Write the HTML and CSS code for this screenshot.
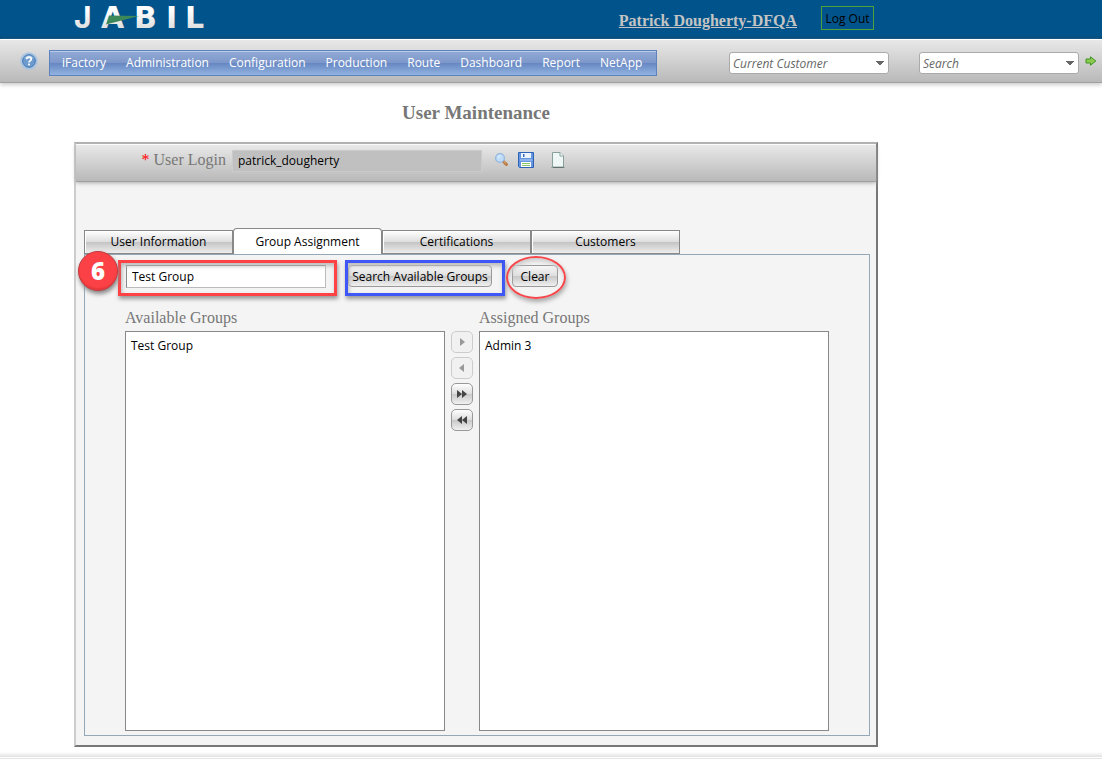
FILE: index.html
```html
<!DOCTYPE html>
<html lang="en">
<head>
<meta charset="utf-8">
<meta name="viewport" content="width=device-width, initial-scale=1">
<title>User Maintenance</title>
<link rel="stylesheet" href="styles.css">
</head>
<body>
<header class="banner">
  <svg class="logo" viewBox="0 0 140 38" role="img" aria-label="Jabil">
    <defs><linearGradient id="silver" x1="0" y1="0" x2="0" y2="1"><stop offset="0.3" stop-color="#fff"/><stop offset="1" stop-color="#d4d4d4"/></linearGradient></defs>
    <text y="28" fill="url(#silver)"><tspan class="logo-narrow" x="1">J</tspan><tspan class="logo-wide" x="28 61 93 112">ABIL</tspan></text>
    <path d="M36 15.5 66 16 33 24.5Z" fill="#3d8858"/>
  </svg>
  <a class="account" href="#">Patrick Dougherty-DFQA</a>
  <button class="logout" type="button">Log Out</button>
</header>
<div class="toolbar">
  <a class="help" href="#" aria-label="Help">
    <svg viewBox="0 0 18 18" width="18" height="18"><circle cx="9" cy="9" r="8.7" fill="#a9c4e2"/><circle cx="9" cy="9" r="6.3" fill="#6d9bce" stroke="#4679b3"/><path d="M4 6Q9 1 14 6Q9 8 4 6" fill="#9bbfe3"/><path d="M6.7 7.2Q6.8 5 9 5Q11.3 5 11.3 7Q11.3 8.2 9.9 8.9Q9 9.4 9 10.5" fill="none" stroke="#fff" stroke-width="1.7"/><rect x="8.1" y="11.6" width="1.8" height="1.8" fill="#fff"/></svg>
  </a>
  <nav class="menu" aria-label="Main">
    <a href="#">iFactory</a><a href="#">Administration</a><a href="#">Configuration</a><a href="#">Production</a><a href="#">Route</a><a href="#">Dashboard</a><a href="#">Report</a><a href="#">NetApp</a>
  </nav>
  <div class="lookups">
    <select class="combo" aria-label="Current customer"><option>Current Customer</option></select>
    <select class="combo" aria-label="Search"><option>Search</option></select>
  </div>
  <button class="go" type="button" aria-label="Go">
    <svg viewBox="0 0 12 10" width="12" height="10"><path d="M1 3H5.5V.8L10.8 5 5.5 9.2V7H1Z" fill="#8ccb52" stroke="#3f9421"/></svg>
  </button>
</div>
<main class="page">
  <h1 class="title">User Maintenance</h1>
  <section class="panel">
    <div class="login-bar">
      <label class="caption login-label" for="login"><span class="required">*</span> User Login</label>
      <input class="login-field" id="login" value="patrick_dougherty" readonly>
      <div class="actions">
        <button class="icon-button" type="button" aria-label="Find">
          <svg viewBox="0 0 16 16" width="16" height="16"><path d="M9.5 9.5 12.4 12.4" stroke="#b87842" stroke-width="3" stroke-linecap="round"/><path d="M9.6 9.1 12.2 11.6" stroke="#e8b684" stroke-width="1"/><circle cx="6" cy="6" r="4.4" fill="#bfdcf8" stroke="#96b7df" stroke-width="1.3"/><path d="M4 6Q4.2 4 6.5 3.8" stroke="#eef7ff" fill="none"/></svg>
        </button>
        <button class="icon-button" type="button" aria-label="Save">
          <svg viewBox="0 0 16 16" width="16" height="16"><path d="M.5 .5H15.5V15.5H1.5L.5 14.5Z" fill="#6696de" stroke="#2d62b8"/><path d="M3 1H13V6H3Z" fill="#eef4fd"/><rect x="5" y="2" width="1.5" height="3" fill="#3b6ebc"/><path d="M2 7H14V9H2Z" fill="#8db4ee"/><path d="M3 10H13V15H3Z" fill="#fff"/><path d="M4 11.5H12M4 13.5H12" stroke="#86c465" stroke-width="1.2"/></svg>
        </button>
        <button class="icon-button icon-new" type="button" aria-label="New">
          <svg viewBox="0 0 16 16" width="16" height="16"><path d="M1 15.5H15" stroke="#a2a8a7"/><path d="M2.5 .5H10L13.5 4V15.5H2.5Z" fill="#eef7f5" stroke="#87a09c"/><path d="M3 15.3H13.5" stroke="#5c6d6a" stroke-width="1.2"/><path d="M10 .5V4H13.5" fill="#fff" stroke="#87a09c"/></svg>
        </button>
      </div>
    </div>
    <div class="panel-body">
      <div class="tabs" role="tablist">
        <button class="tab" type="button" role="tab">User Information</button>
        <button class="tab tab-active" type="button" role="tab" aria-selected="true">Group Assignment</button>
        <button class="tab" type="button" role="tab">Certifications</button>
        <button class="tab" type="button" role="tab">Customers</button>
      </div>
      <div class="tab-panel" role="tabpanel">
        <div class="search-row">
          <div class="marked">
            <input class="group-field" aria-label="Group name" value="Test Group">
            <span class="mark mark-red"></span>
            <span class="step">6</span>
          </div>
          <div class="marked">
            <button class="push push-search" type="button">Search Available Groups</button>
            <span class="mark mark-blue"></span>
          </div>
          <div class="marked">
            <button class="push push-clear" type="button">Clear</button>
            <span class="mark mark-oval"></span>
          </div>
        </div>
        <div class="transfer">
          <label class="caption" for="available">Available Groups</label>
          <label class="caption assigned-label" for="assigned">Assigned Groups</label>
          <select class="list" id="available" multiple><option>Test Group</option></select>
          <div class="movers">
            <button class="mover" type="button" disabled aria-label="Add"><svg viewBox="0 0 12 10" width="12" height="10"><path d="M4 1 9 5 4 9Z" fill="#999"/></svg></button>
            <button class="mover" type="button" disabled aria-label="Remove"><svg viewBox="0 0 12 10" width="12" height="10"><path d="M8 1 3 5 8 9Z" fill="#999"/></svg></button>
            <button class="mover" type="button" aria-label="Add all"><svg viewBox="0 0 12 10" width="12" height="10"><path d="M1 1 6 5 1 9ZM6 1 11 5 6 9Z" fill="#444"/></svg></button>
            <button class="mover" type="button" aria-label="Remove all"><svg viewBox="0 0 12 10" width="12" height="10"><path d="M6 1 1 5 6 9ZM11 1 6 5 11 9Z" fill="#444"/></svg></button>
          </div>
          <select class="list" id="assigned" multiple><option>Admin 3</option></select>
        </div>
      </div>
    </div>
  </section>
</main>
<footer class="footer"></footer>
</body>
</html>
```
FILE: styles.css
```css
* { box-sizing: border-box; }
body {
  margin: 0;
  min-height: 100vh;
  display: flex;
  flex-direction: column;
  background: #fff;
  color: #000;
  font: 12px/16px "Open Sans", "Noto Sans", sans-serif;
}
button, input, select { font: inherit; color: inherit; margin: 0; }
svg { display: block; }

.banner {
  display: flex;
  align-items: flex-start;
  gap: 24px;
  height: 39px;
  padding: 0 228px 0 73px;
  background: linear-gradient(#00548b 90%, #004674);
}
.logo { width: 140px; height: 38px; overflow: visible; }
.logo-narrow { font: 700 30px "Inter", sans-serif; }
.logo-wide { font: 700 30px "DejaVu Sans", sans-serif; }
.account {
  margin: 11px 0 0 auto;
  color: #c4c4c4;
  font: bold 16px/20px "Liberation Serif", serif;
}
.logout {
  width: 53px;
  height: 24px;
  margin-top: 6px;
  padding: 2px 0 0;
  border: 1px solid #4fa03c;
  background: none;
}

.toolbar {
  display: flex;
  align-items: center;
  height: 44px;
  padding: 4px 5px 0 20px;
  border-top: 1px solid #fff;
  border-bottom: 1px solid #a0a0a0;
  background: linear-gradient(#e8e8e8, #b9b9b9);
  box-shadow: 0 2px 4px #ccc;
}
.help { width: 18px; margin: 0 11px 4px 0; }
.menu {
  display: flex;
  height: 26px;
  padding: 0 4px 0 2px;
  border: 1px solid #5d82bd;
  box-shadow: inset 0 1px #b8cbe9;
  background: linear-gradient(#91aad6, #7d97ca 50%, #6687c2 51%, #92b3e0);
}
.menu a {
  padding: 0 10px;
  color: #fff;
  line-height: 24px;
  text-decoration: none;
}
.lookups { display: flex; gap: 30px; margin-left: auto; }
.combo {
  width: 160px;
  height: 22px;
  padding: 2px 18px 0 3px;
  appearance: none;
  border: 1px solid #aaa;
  border-radius: 3px;
  background-color: #fff;
  background-image: linear-gradient(to bottom right, #666 50%, transparent 51%), linear-gradient(to bottom left, #666 50%, transparent 51%);
  background-size: 4px 5px;
  background-repeat: no-repeat;
  background-position: right 4px center, right 8px center;
  color: #666;
  font-style: italic;
}
.go { margin: 0 0 4px 6px; padding: 0; border: 0; background: none; }

.page { width: 100%; max-width: 878px; padding-left: 74px; }
.title {
  margin: 20px 0 19px;
  color: #777;
  font: bold 19px/20px "Liberation Serif", serif;
  text-align: center;
}
.panel {
  border: 2px solid;
  border-color: #b3b3b3 #777 #777 #ccc;
  background: #f4f4f4;
}
.login-bar {
  display: flex;
  align-items: flex-start;
  height: 38px;
  padding: 5px 0 0 60px;
  border-top: 1px solid #fafafa;
  border-bottom: 1px solid #a0a0a0;
  background: linear-gradient(#e8e8e8, #b9b9b9);
  box-shadow: 0 1px 4px #aaa;
}
.caption { color: #777; font: 16px/20px "Liberation Serif", serif; }
.required { color: #f00; }
.login-label { width: 90px; text-align: right; }
.login-field {
  width: 250px;
  height: 22px;
  margin-left: 6px;
  padding: 0 5px 1px;
  border: 1px solid #cbcbcb;
  background: #c0c0c0;
}
.actions { display: flex; gap: 8px; padding: 2px 0 0 12px; }
.icon-button { padding: 0; border: 0; background: none; }
.icon-new { margin-left: 8px; }

.panel-body { padding: 46px 6px 9px 8px; }
.tabs { display: flex; align-items: flex-end; }
.tab {
  width: 149px;
  height: 24px;
  padding: 0;
  border: 1px solid #888;
  background: linear-gradient(#fff, #ddd 50%, #c4c4c4 51%, #eee);
  box-shadow: inset 1px 1px #fff;
}
.tab-active {
  height: 26px;
  border-bottom: 0;
  border-radius: 4px 4px 0 0;
  background: #fff;
}
.tab-panel { padding: 10px 40px 4px; border: 1px solid #94a8b8; }
.search-row { display: flex; padding-left: 1px; }
.marked { position: relative; }
.group-field {
  display: block;
  width: 200px;
  height: 23px;
  padding: 0 5px;
  border: 1px solid #bbb;
  border-color: #777 #bbb #bbb #888;
  background: #fff;
}
.push {
  display: block;
  height: 22px;
  padding: 2px 0 0;
  border: 1px solid #999;
  border-radius: 4px;
  background: linear-gradient(#f8f8f8, #ddd 50%, #c8c8c8 51%, #f0f0f0);
  white-space: nowrap;
}
.push-search { width: 144px; margin-left: 22px; }
.push-clear { width: 46px; margin-left: 20px; }
.mark { position: absolute; pointer-events: none; }
.mark-red {
  inset: -5px -11px -8px -8px;
  border: 3px solid #ff4246;
  box-shadow: 1px 3px 4px #999, inset 1px 3px 4px #bbb;
}
.mark-blue {
  inset: -5px -13px -8px 19px;
  border: 3px solid #3f57f5;
  box-shadow: 1px 3px 4px #999, inset 1px 3px 4px #bbb;
}
.mark-oval {
  inset: -9px -8px -11px 14px;
  border: 2px solid #f6474b;
  border-radius: 50%;
  box-shadow: 1px 3px 4px #aaa, inset 1px 3px 4px #ccc;
}
.step {
  position: absolute;
  top: -14px;
  left: -48px;
  width: 40px;
  height: 40px;
  border: 1px solid #c13b40;
  border-radius: 50%;
  background: #fb4145;
  box-shadow: 1px 3px 4px #888, inset 0 -3px 1px -1px #e8383d;
  color: #fff;
  font-size: 24px;
  font-weight: 800;
  line-height: 37px;
  text-align: center;
}
.transfer {
  display: grid;
  grid-template-columns: 320px 22px 350px;
  gap: 3px 6px;
  margin-top: 20px;
}
.assigned-label { grid-column: 3; }
.list {
  height: 400px;
  padding: 5px;
  border: 1px solid #888;
  border-radius: 0;
  background: #fff;
}
.list option { padding: 0; min-height: 16px; }
.movers { display: flex; flex-direction: column; gap: 4px; }
.mover {
  display: grid;
  place-items: center;
  height: 22px;
  padding: 0;
  border: 1px solid #999;
  border-radius: 5px;
  background: linear-gradient(#fff, #ddd 50%, #c8c8c8 51%, #f0f0f0);
}
.mover:disabled { border-color: #ccc; background: #f1f1f1; }

.footer {
  height: 7px;
  margin-top: auto;
  border-bottom: 1px solid #e4e4e4;
  background: linear-gradient(#fff, #e2e2e2 80%, #fff 81%);
}
```
